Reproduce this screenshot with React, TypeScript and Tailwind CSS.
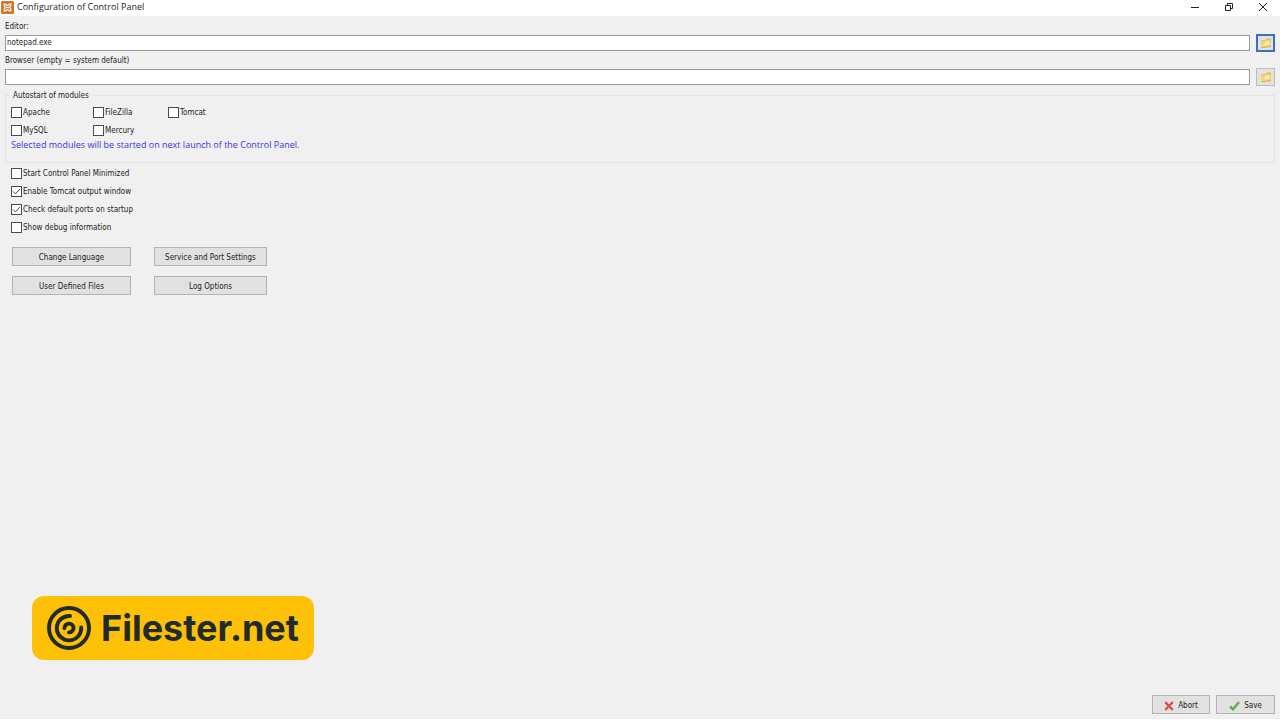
import React, { useState } from "react";

const font = "font-['DejaVu_Sans_Condensed','DejaVu_Sans',sans-serif]";
const wideFont = "font-['Open_Sans','Noto_Sans',sans-serif]";

function FolderIcon() {
  return (
    <svg viewBox="0 0 14 14" className="h-3.5 w-3.5 shrink-0" aria-hidden="true">
      <path d="M2 4.500 6.500 4 7.500 2.800 12 2.500V10L3 12z" fill="#e3b95a" />
      <path d="M1.500 5.500 5.500 5.200 7 4 11.500 4 12 10.500 2.500 12z" fill="#f5d878" />
      <path d="M6 6.500 10.500 5.500V8.500L5 9.500z" fill="#fbebaa" />
      <path d="M2.300 11.800 12 10.500" stroke="#dda941" strokeWidth="1" />
    </svg>
  );
}

function AppIcon() {
  return (
    <svg viewBox="0 0 13 13" className="h-[13px] w-[13px]" aria-hidden="true">
      <rect width="13" height="13" rx="1.5" fill="#d5742f" />
      <path
        d="M3.200 3.200h1.300c1 0 1 1.300 2 1.300s1-1.300 2-1.300h1.300v1.300c0 1-1 1-1 2s1 1 1 2v1.300H8.500c-1 0-1-1.300-2-1.300s-1 1.300-2 1.300H3.200V8.500c0-1 1-1 1-2s-1-1-1-2z"
        fill="none"
        stroke="#fff"
        strokeWidth="1.200"
      />
      <path d="M5 6.500h3" stroke="#fff" strokeWidth="1.200" />
    </svg>
  );
}

type CheckProps = {
  label: string;
  defaultChecked?: boolean;
};

function Check({ label, defaultChecked = false }: CheckProps) {
  const [checked, setChecked] = useState(defaultChecked);

  return (
    <label className="flex h-[18px] items-center gap-px">
      <span className="grid h-[11px] w-[11px] shrink-0">
        <input
          type="checkbox"
          checked={checked}
          onChange={(e) => setChecked(e.target.checked)}
          className="col-start-1 row-start-1 h-[11px] w-[11px] appearance-none border border-[#4a4a4a] bg-white"
        />
        {checked && (
          <svg
            viewBox="0 0 11 11"
            className="pointer-events-none col-start-1 row-start-1 h-[11px] w-[11px]"
            aria-hidden="true"
          >
            <path
              d="M2 5.400 4.500 7.900 9 3"
              fill="none"
              stroke="#444"
              strokeWidth="1"
            />
          </svg>
        )}
      </span>
      <span className="pt-0.5 whitespace-nowrap">{label}</span>
    </label>
  );
}

type PathFieldProps = {
  id: string;
  label: string;
  value?: string;
  focused?: boolean;
};

function PathField({ id, label, value = "", focused = false }: PathFieldProps) {
  return (
    <div>
      <label htmlFor={id} className="block h-4 pt-px leading-4">
        {label}
      </label>
      <div className="flex items-center gap-[6px]">
        <input
          id={id}
          type="text"
          defaultValue={value}
          className="h-4 min-w-0 flex-1 border border-[#9a9a9a] bg-white px-px pb-0.5 leading-3 outline-none"
        />
        <button
          type="button"
          aria-label={`Browse for ${id}`}
          className={
            focused
              ? "flex h-[18px] w-[19px] items-center justify-center border-2 border-[#3b6fc0] bg-[#dfe3e8]"
              : "flex h-[18px] w-[19px] items-center justify-center border border-[#bdbdbd] bg-[#e2e2e2]"
          }
        >
          <FolderIcon />
        </button>
      </div>
    </div>
  );
}

const buttonClass =
  "flex h-[19px] items-center justify-center border border-[#b4b4b4] bg-[#e1e1e1] pt-0.5 whitespace-nowrap";

function TitleBar() {
  return (
    <header className="flex h-4 items-center bg-white pb-0.5 pl-px text-[9px] leading-3">
      <AppIcon />
      <h1 className={`ml-[3px] flex-1 ${wideFont}`}>
        Configuration of Control Panel
      </h1>
      <div className="flex items-center gap-6 pr-3 text-[#222]">
        <button type="button" aria-label="Minimize">
          <svg viewBox="0 0 10 10" className="h-2.5 w-2.5">
            <path d="M1 5.500h8" stroke="currentColor" />
          </svg>
        </button>
        <button type="button" aria-label="Restore">
          <svg viewBox="0 0 10 10" className="h-2.5 w-2.5" fill="none">
            <path
              d="M1.500 3.500h5v5h-5zM3.500 3.500v-2h5v5h-2"
              stroke="currentColor"
            />
          </svg>
        </button>
        <button type="button" aria-label="Close">
          <svg viewBox="0 0 10 10" className="h-2.5 w-2.5">
            <path d="m1 1 8 8M9 1 1 9" stroke="currentColor" />
          </svg>
        </button>
      </div>
    </header>
  );
}

function Brand() {
  return (
    <div className="flex h-16 w-[282px] items-center gap-2.5 rounded-xl bg-[#ffc107] pl-[15px] text-[#212b2b]">
      <svg
        viewBox="0 0 44 44"
        className="h-11 w-11"
        fill="none"
        stroke="currentColor"
        strokeWidth="3.9"
        strokeLinecap="round"
        aria-hidden="true"
      >
        <circle cx="22" cy="22" r="20" />
        <path d="M23 10A12.200 12.200 0 1 0 34.200 21.500" />
        <path d="M17.400 22.200C17.600 19.200 19.800 17.600 22 17.600c2.600 0 4.500 2 4.500 4.400s-1.900 4.400-4.500 4.400" />
      </svg>
      <span className="font-['Inter',sans-serif] text-[36px] leading-none font-bold">
        Filester.net
      </span>
    </div>
  );
}

export function App() {
  return (
    <div
      className={`flex min-h-screen flex-col bg-[#f0f0f0] text-[8px] text-[#1c1c1c] ${font}`}
    >
      <TitleBar />

      <main className="flex flex-1 flex-col px-[5px] pt-0.5">
        {/* Paths */}
        <PathField id="editor" label="Editor:" value="notepad.exe" focused />
        <PathField id="browser" label="Browser (empty = system default)" />

        {/* Modules */}
        <fieldset className="mt-px border border-[#e4e4e4] px-[5px] pb-3">
          <legend className="ml-px h-4 px-px pt-px leading-4">
            Autostart of modules
          </legend>
          <div className="grid w-fit grid-cols-[82px_75px_auto]">
            <Check label="Apache" />
            <Check label="FileZilla" />
            <Check label="Tomcat" />
            <Check label="MySQL" />
            <Check label="Mercury" />
          </div>
          <p className={`text-[9px] leading-[11px] text-[#3a34e0] ${wideFont}`}>
            Selected modules will be started on next launch of the Control
            Panel.
          </p>
        </fieldset>

        {/* Options */}
        <div className="flex flex-col items-start px-1.5 pt-px">
          <Check label="Start Control Panel Minimized" />
          <Check label="Enable Tomcat output window" defaultChecked />
          <Check label="Check default ports on startup" defaultChecked />
          <Check label="Show debug information" />
        </div>

        <div className="mt-[11px] grid w-fit grid-cols-[119px_113px] gap-x-[23px] gap-y-2.5 pl-[7px]">
          <button type="button" className={buttonClass}>
            Change Language
          </button>
          <button type="button" className={buttonClass}>
            Service and Port Settings
          </button>
          <button type="button" className={buttonClass}>
            User Defined Files
          </button>
          <button type="button" className={buttonClass}>
            Log Options
          </button>
        </div>

        <div className="mt-auto pb-[35px] pl-[27px]">
          <Brand />
        </div>
      </main>

      <footer className="flex justify-end gap-[6px] border-b border-white pr-[5px] pb-[5px]">
        <button type="button" className={`${buttonClass} w-[58px] gap-1`}>
          <svg viewBox="0 0 10 10" className="h-2.5 w-2.5" aria-hidden="true">
            <path
              d="M1.200 1.200 8.800 9M8.800 1 1.200 9"
              stroke="#dc4f49"
              strokeWidth="2.400"
            />
          </svg>
          Abort
        </button>
        <button type="button" className={`${buttonClass} w-[59px] gap-1`}>
          <svg viewBox="0 0 11 10" className="h-2.5 w-[11px]" aria-hidden="true">
            <path
              d="M1 5.500 4 8.300 10 1"
              fill="none"
              stroke="#5cae4c"
              strokeWidth="2.400"
            />
          </svg>
          Save
        </button>
      </footer>
    </div>
  );
}

export default App;
